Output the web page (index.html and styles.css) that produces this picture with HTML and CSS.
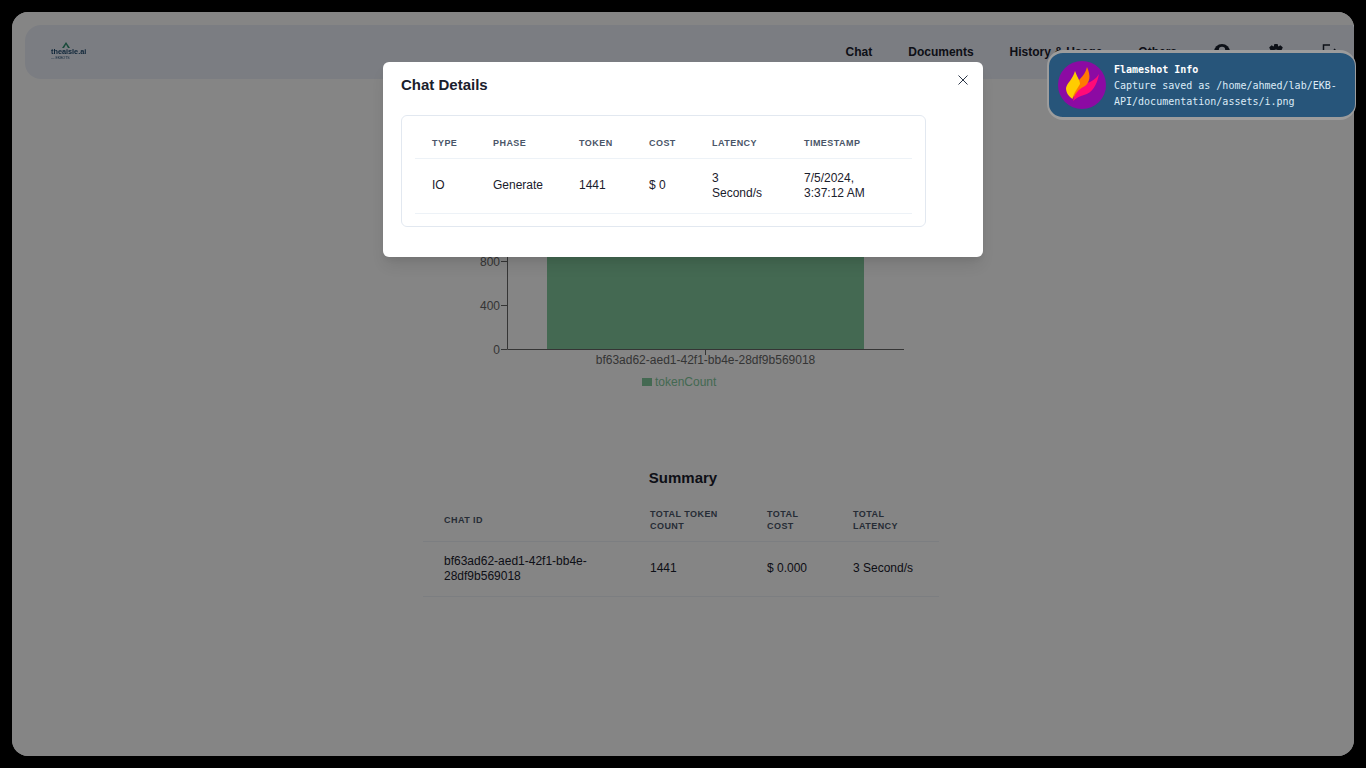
FILE: index.html
```html
<!DOCTYPE html>
<html lang="en">
<head>
    <meta charset="UTF-8">
    <meta name="viewport" content="width=device-width, initial-scale=1.0">
    <title>theaisle.ai - History &amp; Usage</title>
    <link rel="stylesheet" href="styles.css">
</head>
<body>
    <div class="frame">
        <nav class="navbar">
            <div class="logo">
                <svg class="logo-peak" width="8" height="6" viewBox="0 0 8 6">
                    <path d="M4 0 L8 6 L6 6 L4 2.6 L2 6 L0 6 Z" fill="#2f8f6f"/>
                </svg>
                <span class="logo-name">theaisle.ai</span>
                <span class="logo-sub">&mdash; EKBOTS</span>
            </div>
            <div class="nav-links">
                <a>Chat</a>
                <a>Documents</a>
                <a>History &amp; Usage</a>
                <a>Others</a>
            </div>
            <div class="nav-icons">
                <svg width="16" height="16" viewBox="0 0 16 16">
                    <circle cx="8" cy="8" r="8" fill="#1a202c"/>
                    <circle cx="8" cy="6" r="3.2" fill="#ecf0fa"/>
                    <path d="M3 13 C4 10 12 10 13 13 Z" fill="#ecf0fa"/>
                </svg>
                <svg width="16" height="16" viewBox="0 0 16 16">
                    <g fill="#1a202c">
                        <circle cx="8" cy="8" r="6.2"/>
                        <rect x="6" y="0" width="4" height="16" rx="1"/>
                        <rect x="0" y="6" width="16" height="4" rx="1"/>
                        <rect x="6" y="0" width="4" height="16" rx="1" transform="rotate(45 8 8)"/>
                        <rect x="6" y="0" width="4" height="16" rx="1" transform="rotate(-45 8 8)"/>
                    </g>
                    <circle cx="8" cy="8" r="2.4" fill="#ecf0fa"/>
                </svg>
                <svg width="16" height="16" viewBox="0 0 16 16" fill="none" stroke="#1a202c" stroke-width="1.5">
                    <path d="M8 1 H1.5 V15 H8"/>
                    <path d="M5 8 H15 M12 5 L15 8 L12 11"/>
                </svg>
            </div>
        </nav>

        <main class="content">
            <svg class="chart" width="516" height="300" viewBox="0 0 516 300">
                <rect x="124" y="90.5" width="317" height="158.5" fill="#82ca9d"/>
                <g stroke="#666" fill="none">
                    <path d="M84.5 73 V249.5 H481"/>
                    <path d="M78 73.5 H84 M78 117.5 H84 M78 161.5 H84 M78 205.5 H84 M78 249.5 H84 M282.5 249 V255"/>
                </g>
                <g class="chart-text" text-anchor="end">
                    <text x="77" y="77">1600</text>
                    <text x="77" y="121">1200</text>
                    <text x="77" y="166">800</text>
                    <text x="77" y="210">400</text>
                    <text x="77" y="254">0</text>
                </g>
                <text class="chart-text" x="282.5" y="264" text-anchor="middle">bf63ad62-aed1-42f1-bb4e-28df9b569018</text>
                <rect x="219" y="278" width="10" height="8" fill="#82ca9d"/>
                <text class="chart-legend" x="232" y="286">tokenCount</text>
            </svg>

            <h2 class="summary-title">Summary</h2>
            <table class="summary-table">
                <thead>
                    <tr>
                        <th class="col-id">Chat ID</th>
                        <th class="col-count">Total Token Count</th>
                        <th class="col-total">Total Cost</th>
                        <th class="col-latency">Total Latency</th>
                    </tr>
                </thead>
                <tbody>
                    <tr>
                        <td>bf63ad62-aed1-42f1-bb4e-28df9b569018</td>
                        <td>1441</td>
                        <td>$ 0.000</td>
                        <td>3 Second/s</td>
                    </tr>
                </tbody>
            </table>
        </main>

        <div class="overlay"></div>

        <div class="modal">
            <h3 class="modal-title">Chat Details</h3>
            <button class="modal-close" aria-label="Close">
                <svg width="10" height="10" viewBox="0 0 10 10" stroke="#2d3748" stroke-width="1">
                    <path d="M0.5 0.5 L9.5 9.5 M9.5 0.5 L0.5 9.5"/>
                </svg>
            </button>
            <div class="modal-card">
                <table class="details-table">
                    <thead>
                        <tr>
                            <th class="col-type">Type</th>
                            <th class="col-phase">Phase</th>
                            <th class="col-token">Token</th>
                            <th class="col-cost">Cost</th>
                            <th class="col-lat">Latency</th>
                            <th class="col-time">Timestamp</th>
                        </tr>
                    </thead>
                    <tbody>
                        <tr>
                            <td>IO</td>
                            <td>Generate</td>
                            <td>1441</td>
                            <td>$ 0</td>
                            <td>3 Second/s</td>
                            <td>7/5/2024, 3:37:12 AM</td>
                        </tr>
                    </tbody>
                </table>
            </div>
        </div>
    </div>

    <div class="toast">
        <svg class="toast-icon" width="48" height="48" viewBox="0 0 48 48">
            <circle cx="24" cy="24" r="24" fill="#8c0aa3"/>
            <path d="M41 13 C39 24 34 32 26 34 C22 35 18 37 15 40 C17 31 22 24 29 22 C33 21 38 18 41 13 Z" fill="#ff0a78"/>
            <path d="M29 6 C33 15 32 21 27 25 C22 27 18 31 15.5 37 C14 29 16 23 20 20 L22 18 C25 15 28 11 29 6 Z" fill="#ff7a00"/>
            <path d="M17 10 C19 16 22 19 22 23 C20 27 16 31 14.5 38 C10 35 8 31 8 27 C9 22 15 18 17 10 Z" fill="#ffcc00"/>
        </svg>
        <div class="toast-text">
            <div class="toast-title">Flameshot Info</div>
            <div>Capture saved as /home/ahmed/lab/EKB-<br>API/documentation/assets/i.png</div>
        </div>
    </div>
</body>
</html>
```

FILE: styles.css
```css
html, body {
    height: 100%;
}
body {
    margin: 0;
    padding: 12px;
    box-sizing: border-box;
    background: #000;
    color: #1a202c;
    font-family: "Liberation Sans", Arial, sans-serif;
    font-size: 12px;
    line-height: 15px;
    overflow: hidden;
}
.frame {
    position: relative;
    height: 744px;
    background: #fff;
    border-radius: 16px;
    overflow: hidden;
}
.overlay {
    position: absolute;
    top: 0;
    right: 0;
    bottom: 0;
    left: 0;
    background: rgba(0, 0, 0, 0.48);
}

/* navbar */
.navbar {
    display: flex;
    align-items: center;
    height: 54px;
    margin: 13px -20px 0 13px;
    padding: 0 36px 0 26px;
    background: #ecf0fa;
    border-radius: 16px;
}
.logo {
    display: flex;
    flex-direction: column;
    align-items: flex-start;
    width: 36px;
    margin-top: -2px;
    color: #1f4a6e;
    filter: blur(0.3px);
}
.logo-peak {
    display: block;
    margin-left: 11px;
}
.logo-name {
    font-size: 7.3px;
    line-height: 8px;
    font-weight: bold;
    white-space: nowrap;
}
.logo-sub {
    font-size: 3.5px;
    line-height: 4px;
    white-space: nowrap;
}
.nav-links {
    display: flex;
    gap: 36px;
    margin-left: auto;
    font-weight: bold;
}
.nav-icons {
    display: flex;
    gap: 38px;
    margin-left: 37px;
    margin-top: -1px;
}

/* chart and summary */
.content {
    display: flex;
    flex-direction: column;
    align-items: center;
    padding: 21px 4px 0 0;
}
.chart {
    display: block;
}
.chart-text {
    font-size: 12px;
    fill: #666;
}
.chart-legend {
    font-size: 12px;
    fill: #82ca9d;
}
.summary-title {
    margin: 68px 0 9px 4px;
    font-size: 15px;
    line-height: 20px;
    font-weight: bold;
}
table {
    border-collapse: collapse;
    table-layout: fixed;
}
th {
    font-size: 9px;
    line-height: 12px;
    font-weight: bold;
    letter-spacing: 0.05em;
    text-transform: uppercase;
    text-align: left;
    color: #4a5568;
}
th, td {
    box-sizing: border-box;
}
.summary-table {
    width: 516px;
}
.summary-table th, .summary-table td {
    padding-left: 21px;
    padding-right: 21px;
    border-bottom: 1px solid #edf2f7;
}
.summary-table th {
    height: 44px;
    padding-top: 2px;
    padding-bottom: 0;
}
.summary-table td {
    height: 55px;
    padding-top: 0;
    padding-bottom: 0;
}
.col-id { width: 206px; }
.col-count { width: 117px; }
.col-total { width: 86px; }
.col-latency { width: 107px; }

/* modal */
.modal {
    position: absolute;
    top: 50px;
    left: 371px;
    width: 600px;
    height: 195px;
    box-sizing: border-box;
    padding: 13px 18px 0;
    background: #fff;
    border-radius: 6px;
    box-shadow: 0 10px 15px -3px rgba(0, 0, 0, 0.1), 0 4px 6px -2px rgba(0, 0, 0, 0.05);
}
.modal-title {
    margin: 0 0 20px;
    font-size: 15px;
    line-height: 20px;
    font-weight: bold;
}
.modal-close {
    position: absolute;
    top: 13px;
    right: 15px;
    width: 10px;
    height: 10px;
    padding: 0;
    border: none;
    background: none;
    line-height: 0;
}
.modal-card {
    width: 525px;
    box-sizing: border-box;
    padding: 11px 13px 12px;
    border: 1px solid #e2e8f0;
    border-radius: 6px;
}
.details-table {
    width: 497px;
}
.details-table th, .details-table td {
    padding: 0 17px;
    border-bottom: 1px solid #edf2f7;
}
.details-table th {
    height: 31px;
    padding-top: 2px;
}
.details-table td {
    height: 55px;
}
.col-type { width: 61px; }
.col-phase { width: 86px; }
.col-token { width: 70px; }
.col-cost { width: 63px; }
.col-lat { width: 92px; }
.col-time { width: 125px; }

/* desktop notification */
.toast {
    position: absolute;
    top: 50px;
    left: 1047px;
    width: 309px;
    height: 70px;
    box-sizing: border-box;
    display: flex;
    align-items: center;
    gap: 8px;
    padding: 0 0 0 9px;
    background: #27557a;
    border: solid #9c9c9c;
    border-width: 3px 1px 3px 2px;
    border-radius: 16px;
    color: #dcebf7;
    font-family: "DejaVu Sans Mono", monospace;
    font-size: 10px;
    line-height: 16px;
}
.toast-icon {
    flex: none;
}
.toast-text {
    padding-top: 2px;
}
.toast-title {
    color: #fff;
    font-weight: bold;
}
```
